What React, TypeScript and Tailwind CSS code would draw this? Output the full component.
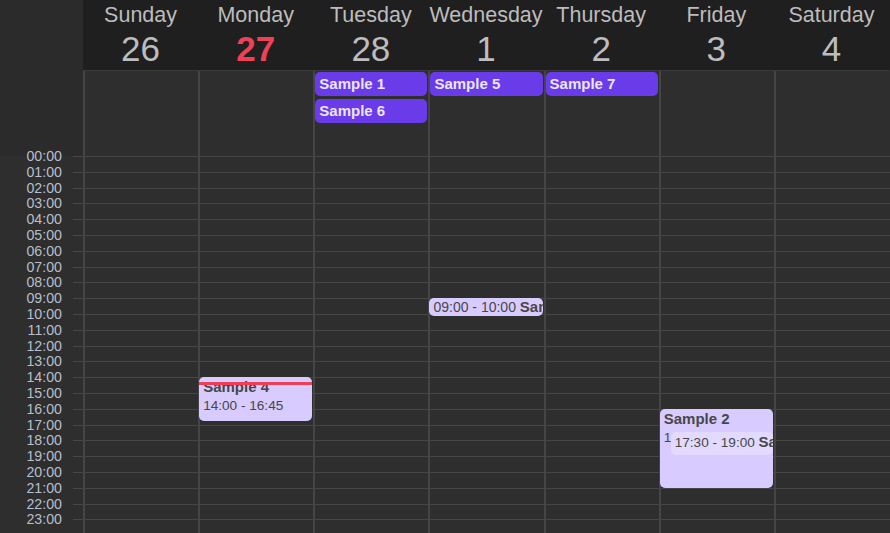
import React from "react";

const HOUR = 15.8;

const days: { name: string; num: string; today?: boolean }[] = [
  { name: "Sunday", num: "26" },
  { name: "Monday", num: "27", today: true },
  { name: "Tuesday", num: "28" },
  { name: "Wednesday", num: "1" },
  { name: "Thursday", num: "2" },
  { name: "Friday", num: "3" },
  { name: "Saturday", num: "4" },
];

const allDay: string[][] = [[], [], ["Sample 1", "Sample 6"], ["Sample 5"], ["Sample 7"], [], []];

const hours = Array.from({ length: 24 }, (_, i) => `${String(i).padStart(2, "0")}:00`);

function pos(start: number, end: number) {
  return { top: start * HOUR, height: (end - start) * HOUR };
}

export default function App() {
  return (
    <div className="w-[890px] h-[533px] overflow-hidden bg-[#2e2e2e] flex flex-col font-['Liberation_Sans',Arial,sans-serif]">
      {/* Header */}
      <div className="flex h-[70px] shrink-0 bg-[#1f1f1f]">
        <div className="w-[83px] bg-[#2b2b2b]" />
        <div className="w-[806px] grid grid-cols-7">
          {days.map((d) => (
            <div key={d.name} className="flex flex-col items-center pt-[3px]">
              <div className="text-[21.5px] leading-[24px] text-[#bcbcbc] whitespace-nowrap">{d.name}</div>
              <div
                className={
                  d.today
                    ? "mt-[2px] text-[35px] leading-[40px] font-bold text-[#ef4056]"
                    : "mt-[2px] text-[35px] leading-[40px] text-[#bdbdbd]"
                }
              >
                {d.num}
              </div>
            </div>
          ))}
        </div>
      </div>

      {/* All-day row */}
      <div className="flex h-[86px] shrink-0">
        <div className="w-[83px] bg-[#2b2b2b]" />
        <div className="w-[806px] grid grid-cols-7 border-t border-[#3b3b3b]">
          {allDay.map((evs, i) => (
            <div key={i} className="border-l-2 border-[#454545] flex flex-col gap-[3px] pt-[1px] pr-[1px]">
              {evs.map((e) => (
                <div
                  key={e}
                  className="h-[24px] rounded-[5px] bg-[#6a3be8] text-[#ebe5ff] font-bold text-[15px] leading-[24px] pl-[4px] whitespace-nowrap overflow-hidden"
                >
                  {e}
                </div>
              ))}
            </div>
          ))}
        </div>
      </div>

      {/* Time grid */}
      <div className="relative flex-1 flex bg-[#2e2e2e]">
        <div className="w-[73px] shrink-0 flex flex-col -translate-y-[8px]">
          {hours.map((h) => (
            <div key={h} className="h-[15.8px] shrink-0 text-right pr-[11px] text-[14.2px] leading-[16px] text-[#b7bfcc]">
              {h}
            </div>
          ))}
        </div>
        <div className="flex-1 flex flex-col">
          {hours.map((h) => (
            <div key={h} className="h-[15.8px] shrink-0 border-t border-[#474747]" />
          ))}
        </div>

        <div className="absolute top-0 bottom-0 left-[83px] w-[806px] grid grid-cols-7">
          {days.map((d, i) => (
            <div key={d.name} className="relative border-l-2 border-[#454545]">
              {i === 1 && (
                <>
                  <div
                    className="absolute left-[-1px] right-[1px] rounded-[5px] bg-[#d8cbff] text-[#474747] px-[4px] pt-[2px] overflow-hidden"
                    style={pos(14, 16.75)}
                  >
                    <div className="text-[15px] leading-[16px] font-bold whitespace-nowrap">Sample 4</div>
                    <div className="mt-[3px] text-[13.6px] leading-[16px] whitespace-nowrap">14:00 - 16:45</div>
                  </div>
                  <div className="absolute left-[-1px] right-[1px] h-[3px] bg-[#ef3e55] top-[225.5px]" />
                </>
              )}
              {i === 3 && (
                <div
                  className="absolute left-[-1px] right-[1px] rounded-[5px] bg-[#d8cbff] text-[#474747] px-[4px] pt-[1px] overflow-hidden whitespace-nowrap text-[14px] leading-[16px]"
                  style={pos(9, 10.1)}
                >
                  09:00 - 10:00 <span className="font-bold text-[15px]">Sample 3</span>
                </div>
              )}
              {i === 5 && (
                <div
                  className="absolute left-[-1px] right-[1px] rounded-[5px] bg-[#d8cbff] text-[#474747] overflow-hidden"
                  style={pos(16, 21)}
                >
                  <div className="px-[4px] pt-[2px] text-[15px] leading-[16px] font-bold whitespace-nowrap">Sample 2</div>
                  <div className="px-[4px] mt-[3px] text-[13.6px] leading-[16px] whitespace-nowrap">16:00 - 21:00</div>
                  <div
                    className="absolute left-[11px] right-0 rounded-[5px] bg-[#e3daff] px-[4px] pt-[2px] text-[13.6px] leading-[16px] whitespace-nowrap overflow-hidden"
                    style={{ top: 1.5 * HOUR, height: 1.5 * HOUR - 1 }}
                  >
                    17:30 - 19:00 <span className="font-bold text-[15px]">Sample 8</span>
                  </div>
                </div>
              )}
            </div>
          ))}
        </div>
      </div>
    </div>
  );
}
